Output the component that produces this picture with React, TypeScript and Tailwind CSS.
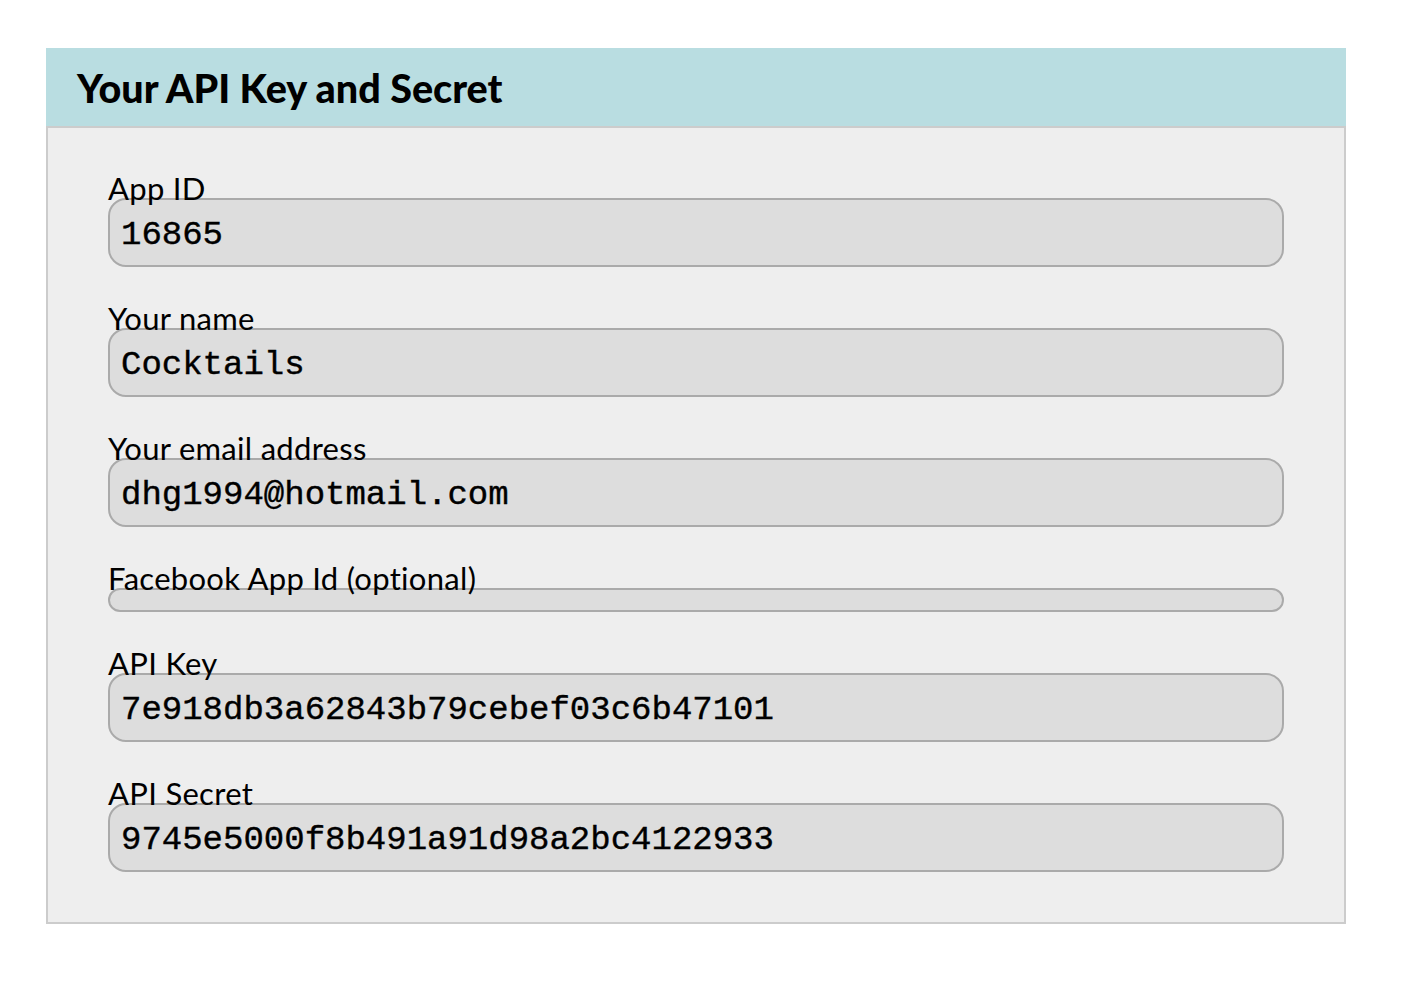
import React from "react";

const fields: { label: string; value: string }[] = [
  { label: "App ID", value: "16865" },
  { label: "Your name", value: "Cocktails" },
  { label: "Your email address", value: "dhg1994@hotmail.com" },
  { label: "Facebook App Id (optional)", value: "" },
  { label: "API Key", value: "7e918db3a62843b79cebef03c6b47101" },
  { label: "API Secret", value: "9745e5000f8b491a91d98a2bc4122933" },
];

export default function App() {
  return (
    <div className="min-h-[986px] bg-white pt-[48px] pl-[46px]">
      <div className="w-[1300px]">
        <div className="h-[80px] bg-[#b9dde1] border-b-2 border-[#cccccc] pl-[31px] flex items-center">
          <h1
            className="text-[39.5px] font-black text-black leading-none pt-[2px]"
            style={{ fontFamily: "Lato, 'Noto Sans', sans-serif" }}
          >
            Your API Key and Secret
          </h1>
        </div>
        <div className="bg-[#eeeeee] border-2 border-t-0 border-[#cccccc] pt-[46px] pb-[50px] px-[60px] flex flex-col gap-[37px]">
          {fields.map((f) => (
            <div key={f.label} className="flex flex-col">
              <div
                className="relative z-10 h-[24px] leading-[28px] text-[31px] tracking-[0.3px] text-black whitespace-nowrap"
                style={{ fontFamily: "Lato, 'Noto Sans', sans-serif" }}
              >
                {f.label}
              </div>
              <div
                className="bg-[#dddddd] border-2 border-[#aaaaaa] rounded-[18px] pl-[11px] pr-[10px] pt-[13px] pb-[7px] text-[34px] leading-[45px] text-black [-webkit-text-stroke:0.4px_black]"
                style={{ fontFamily: "'Liberation Mono', 'Courier New', monospace" }}
              >
                {f.value}
              </div>
            </div>
          ))}
        </div>
      </div>
    </div>
  );
}
